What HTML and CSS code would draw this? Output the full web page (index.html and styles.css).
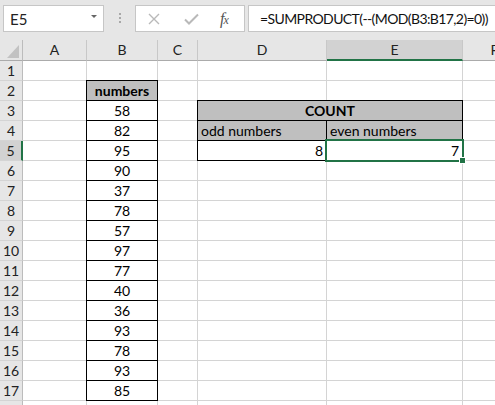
FILE: index.html
```html
<!DOCTYPE html>
<html lang="en">
<head>
    <meta charset="UTF-8" />
    <title>SUMPRODUCT count even numbers</title>
    <link rel="stylesheet" href="styles.css">
</head>
<body>
  <!-- name box + formula bar -->
  <div class="toolbar">
    <div class="namebox">
      <span>E5</span>
      <span class="arrow"></span>
    </div>
    <div class="grip"><i></i><i></i><i></i></div>
    <div class="fx-buttons">
      <svg class="ico-cancel" width="12" height="12" viewBox="0 0 12 12">
        <path d="M1 1 L11 11 M11 1 L1 11" stroke="#b9b9b9" stroke-width="1.4" fill="none" />
      </svg>
      <svg class="ico-enter" width="15" height="12" viewBox="0 0 15 12">
        <path d="M1 6.5 L5 10.5 L14 1.5" stroke="#b9b9b9" stroke-width="2" fill="none" />
      </svg>
      <span class="fx"><i>f</i><i class="x">x</i></span>
    </div>
    <div class="formula">=SUMPRODUCT(--(MOD(B3:B17,2)=0))</div>
  </div>

  <!-- worksheet -->
  <div class="sheet">
    <div class="corner"><span class="tri"></span></div>
    <div class="ch">A</div><div class="ch">B</div><div class="ch">C</div><div class="ch">D</div><div class="ch sel">E</div><div class="ch">F</div>

    <div class="rh">1</div><div class="c"></div><div class="c"></div><div class="c"></div><div class="c"></div><div class="c"></div><div class="c"></div>
    <div class="rh">2</div><div class="c"></div><div class="c bx g b ctr">numbers</div><div class="c"></div><div class="c"></div><div class="c"></div><div class="c"></div>
    <div class="rh">3</div><div class="c"></div><div class="c bx ctr">58</div><div class="c"></div><div class="c bx g b ctr span2">COUNT</div><div class="c"></div>
    <div class="rh">4</div><div class="c"></div><div class="c bx ctr">82</div><div class="c"></div><div class="c bx g">odd numbers</div><div class="c bx g">even numbers</div><div class="c"></div>
    <div class="rh sel">5</div><div class="c"></div><div class="c bx ctr">95</div><div class="c"></div><div class="c bx rt">8</div><div class="c bx rt active">7</div><div class="c"></div>
    <div class="rh">6</div><div class="c"></div><div class="c bx ctr">90</div><div class="c"></div><div class="c"></div><div class="c"></div><div class="c"></div>
    <div class="rh">7</div><div class="c"></div><div class="c bx ctr">37</div><div class="c"></div><div class="c"></div><div class="c"></div><div class="c"></div>
    <div class="rh">8</div><div class="c"></div><div class="c bx ctr">78</div><div class="c"></div><div class="c"></div><div class="c"></div><div class="c"></div>
    <div class="rh">9</div><div class="c"></div><div class="c bx ctr">57</div><div class="c"></div><div class="c"></div><div class="c"></div><div class="c"></div>
    <div class="rh">10</div><div class="c"></div><div class="c bx ctr">97</div><div class="c"></div><div class="c"></div><div class="c"></div><div class="c"></div>
    <div class="rh">11</div><div class="c"></div><div class="c bx ctr">77</div><div class="c"></div><div class="c"></div><div class="c"></div><div class="c"></div>
    <div class="rh">12</div><div class="c"></div><div class="c bx ctr">40</div><div class="c"></div><div class="c"></div><div class="c"></div><div class="c"></div>
    <div class="rh">13</div><div class="c"></div><div class="c bx ctr">36</div><div class="c"></div><div class="c"></div><div class="c"></div><div class="c"></div>
    <div class="rh">14</div><div class="c"></div><div class="c bx ctr">93</div><div class="c"></div><div class="c"></div><div class="c"></div><div class="c"></div>
    <div class="rh">15</div><div class="c"></div><div class="c bx ctr">78</div><div class="c"></div><div class="c"></div><div class="c"></div><div class="c"></div>
    <div class="rh">16</div><div class="c"></div><div class="c bx ctr">93</div><div class="c"></div><div class="c"></div><div class="c"></div><div class="c"></div>
    <div class="rh">17</div><div class="c"></div><div class="c bx ctr">85</div><div class="c"></div><div class="c"></div><div class="c"></div><div class="c"></div>
    <div class="rh">18</div><div class="c"></div><div class="c"></div><div class="c"></div><div class="c"></div><div class="c"></div><div class="c"></div>
  </div>
</body>
</html>
```

FILE: styles.css
```css
html, body {
    margin: 0;
    width: 495px;
    height: 405px;
    overflow: hidden;
    background: #e6e6e6;
    font-family: Lato, 'Liberation Sans', sans-serif;
    font-size: 14px;
    color: #000;
}

/* ---- formula bar ---- */
.toolbar {
    height: 40px;
    box-sizing: border-box;
    padding-top: 5px;
    display: flex;
    align-items: flex-start;
}

.namebox {
    flex-shrink: 0;
    margin-left: 3px;
    width: 101px;
    height: 27px;
    box-sizing: border-box;
    border: 1px solid #c6c6c6;
    background: #fff;
    display: flex;
    align-items: center;
    justify-content: space-between;
    padding: 0 6px 0 6px;
    font-size: 15px;
    color: #222;
}

    .namebox .arrow {
        width: 0;
        height: 0;
        border-left: 3px solid transparent;
        border-right: 3px solid transparent;
        border-top: 3px solid #666;
        margin-bottom: 4px;
    }

.grip {
    flex-shrink: 0;
    margin-left: 15px;
    margin-top: 8px;
    width: 2px;
    display: flex;
    flex-direction: column;
    gap: 2px;
}

    .grip i {
        width: 2px;
        height: 2px;
        background: #a8a8a8;
    }

.fx-buttons {
    flex-shrink: 0;
    margin-left: 14px;
    width: 110px;
    height: 27px;
    box-sizing: border-box;
    border: 1px solid #c6c6c6;
    background: #fff;
    display: flex;
    align-items: center;
    padding-left: 12px;
}

    .fx-buttons .ico-enter {
        margin-left: 24px;
    }

    .fx-buttons .fx {
        margin-left: 21px;
        font-family: 'Liberation Serif', serif;
        font-size: 16px;
        color: #555;
        letter-spacing: -1px;
    }

        .fx-buttons .fx .x {
            font-size: 12px;
        }

.formula {
    margin-left: 3px;
    margin-right: -4px;
    flex: 1;
    min-width: 0;
    height: 27px;
    box-sizing: border-box;
    border: 1px solid #c6c6c6;
    background: #fff;
    padding-left: 11px;
    line-height: 25px;
    font-size: 14px;
    letter-spacing: -0.6px;
    white-space: nowrap;
    color: #111;
}

/* ---- grid ---- */
.sheet {
    display: grid;
    grid-template-columns: 23px 64px 71px 40px 129px 136px 64px;
    grid-template-rows: 21px;
    grid-auto-rows: 20px;
}

.sheet > div {
    box-sizing: border-box;
    border-right: 1px solid #d4d4d4;
    border-bottom: 1px solid #d4d4d4;
    line-height: 19px;
    white-space: nowrap;
}

.corner {
    background: #e6e6e6;
    border-right-color: #bcbcbc !important;
    border-bottom-color: #ababab !important;
    position: relative;
}

    .corner .tri {
        position: absolute;
        right: 3px;
        bottom: 2px;
        width: 0;
        height: 0;
        border-left: 12px solid transparent;
        border-bottom: 13px solid #c2c2c2;
    }

.ch {
    background: #e6e6e6;
    border-right-color: #c8c8c8 !important;
    border-bottom-color: #ababab !important;
    text-align: center;
    line-height: 20px !important;
    color: #222;
}

    .ch.sel {
        background: #d2d2d2;
        border-bottom: 2px solid #217346 !important;
    }

.rh {
    background: #e6e6e6;
    border-right-color: #bcbcbc !important;
    text-align: center;
    color: #222;
}

    .rh.sel {
        background: #d2d2d2;
        border-right: 2px solid #217346 !important;
    }

.c {
    background: #fff;
    padding: 0 3px;
}

.bx {
    border-right-color: #000 !important;
    border-bottom-color: #000 !important;
    box-shadow: -1px 0 #000, 0 -1px #000, -1px -1px #000;
}

.g {
    background: #bfbfbf;
}

.b {
    font-weight: bold;
}

.ctr {
    text-align: center;
}

.rt {
    text-align: right;
}

.span2 {
    grid-column: span 2;
}

/* selected cell frame + fill handle */
.active {
    position: relative;
}

    .active::after {
        content: "";
        position: absolute;
        top: -2px;
        left: -2px;
        right: -2px;
        bottom: -2px;
        border: 2px solid #217346;
    }

    .active::before {
        content: "";
        position: absolute;
        right: -4px;
        bottom: -4px;
        width: 5px;
        height: 5px;
        background: #217346;
        border: 1px solid #fff;
        z-index: 1;
    }
```
